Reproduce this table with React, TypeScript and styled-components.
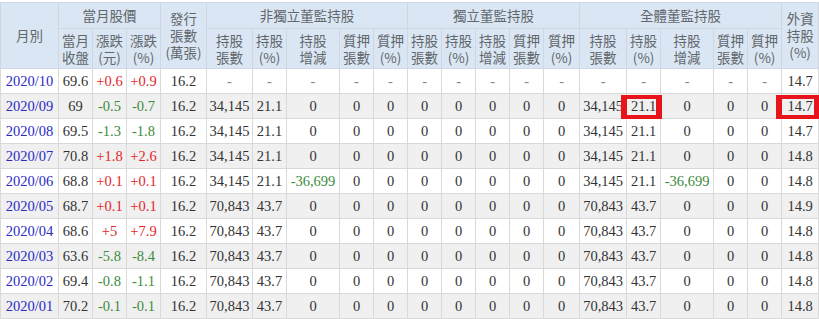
import styled, { createGlobalStyle } from "styled-components";

const GlobalStyle = createGlobalStyle`
	body {
		margin: 0;
		background: #ffffff;
	}
`;

const Page = styled.div`
	padding-top: 2px;
	width: 819px;
`;

const Table = styled.table`
	border-collapse: collapse;
	table-layout: fixed;
	width: 818px;
	font-family: "Liberation Serif", "Times New Roman", serif;
	font-size: 14.5px;
	color: #333333;
`;

const HeadCell = styled.th`
	background: #dae6f3;
	border: 1px solid #cfd8e2;
	color: #62676c;
	font-family: "Noto Sans CJK TC", "Noto Sans", sans-serif;
	font-size: 13.5px;
	font-weight: normal;
	line-height: 17px;
	padding: 0;
	text-align: center;
	vertical-align: middle;
	white-space: nowrap;
`;

const GroupRow = styled.tr`
	height: 26px;
`;

const SubRow = styled.tr`
	height: 40px;
`;

const BodyRow = styled.tr<{ $shaded: boolean }>`
	height: 25px;
	background: ${({ $shaded }) => ($shaded ? "#f0f0f0" : "#ffffff")};
`;

type Tone = "up" | "down" | "dash" | "plain";

const toneColor: Record<Tone, string> = {
	up: "#e3262b",
	down: "#3d8b3d",
	dash: "#888888",
	plain: "#333333",
};

const Cell = styled.td<{ $tone: Tone; $marked?: boolean }>`
	border: 1px solid #d9d9d9;
	color: ${({ $tone }) => toneColor[$tone]};
	padding: 0;
	position: relative;
	text-align: center;
	white-space: nowrap;

	${({ $marked }) =>
		$marked &&
		`
		&::after {
			content: "";
			position: absolute;
			left: -6px;
			right: -2px;
			top: 1px;
			bottom: -1px;
			border-style: solid;
			border-color: #e8141c;
			border-width: 4px 6px;
		}
	`}
`;

const DateCell = styled.td`
	border: 1px solid #d9d9d9;
	color: #2b2bc4;
	padding: 0;
	text-align: center;
	white-space: nowrap;
`;

const widths = [
	58, 34, 34, 34, 46, 46, 34, 53, 34, 34, 34, 34, 34, 34, 36, 47, 34, 53, 34,
	34, 37,
];

interface MonthRow {
	month: string;
	close: string;
	change: string;
	pct: string;
	issued: string;
	board: string[] | null;
	foreign: string;
}

const Z5 = ["0", "0", "0", "0", "0"];

function holdings(shares: string, pct: string, delta: string) {
	return [shares, pct, delta, "0", "0", ...Z5, shares, pct, delta, "0", "0"];
}

const rows: MonthRow[] = [
	{ month: "2020/10", close: "69.6", change: "+0.6", pct: "+0.9", issued: "16.2", board: null, foreign: "14.7" },
	{ month: "2020/09", close: "69", change: "-0.5", pct: "-0.7", issued: "16.2", board: holdings("34,145", "21.1", "0"), foreign: "14.7" },
	{ month: "2020/08", close: "69.5", change: "-1.3", pct: "-1.8", issued: "16.2", board: holdings("34,145", "21.1", "0"), foreign: "14.7" },
	{ month: "2020/07", close: "70.8", change: "+1.8", pct: "+2.6", issued: "16.2", board: holdings("34,145", "21.1", "0"), foreign: "14.8" },
	{ month: "2020/06", close: "68.8", change: "+0.1", pct: "+0.1", issued: "16.2", board: holdings("34,145", "21.1", "-36,699"), foreign: "14.8" },
	{ month: "2020/05", close: "68.7", change: "+0.1", pct: "+0.1", issued: "16.2", board: holdings("70,843", "43.7", "0"), foreign: "14.9" },
	{ month: "2020/04", close: "68.6", change: "+5", pct: "+7.9", issued: "16.2", board: holdings("70,843", "43.7", "0"), foreign: "14.8" },
	{ month: "2020/03", close: "63.6", change: "-5.8", pct: "-8.4", issued: "16.2", board: holdings("70,843", "43.7", "0"), foreign: "14.8" },
	{ month: "2020/02", close: "69.4", change: "-0.8", pct: "-1.1", issued: "16.2", board: holdings("70,843", "43.7", "0"), foreign: "14.8" },
	{ month: "2020/01", close: "70.2", change: "-0.1", pct: "-0.1", issued: "16.2", board: holdings("70,843", "43.7", "0"), foreign: "14.8" },
];

function toneOf(value: string): Tone {
	if (value === "-") return "dash";
	if (value.startsWith("+")) return "up";
	if (value.startsWith("-")) return "down";
	return "plain";
}

const subHeads = [
	["持股", "張數"],
	["持股", "(%)"],
	["持股", "增減"],
	["質押", "張數"],
	["質押", "(%)"],
];

function TwoLine({ lines }: { lines: string[] }) {
	return (
		<>
			{lines[0]}
			<br />
			{lines[1]}
		</>
	);
}

export default function App() {
	return (
		<Page>
			<GlobalStyle />
			<Table>
				<colgroup>
					{widths.map((w, i) => (
						<col key={i} style={{ width: w }} />
					))}
				</colgroup>
				<thead>
					<GroupRow>
						<HeadCell rowSpan={2}>月別</HeadCell>
						<HeadCell colSpan={3}>當月股價</HeadCell>
						<HeadCell rowSpan={2}>
							發行
							<br />
							張數
							<br />
							(萬張)
						</HeadCell>
						<HeadCell colSpan={5}>非獨立董監持股</HeadCell>
						<HeadCell colSpan={5}>獨立董監持股</HeadCell>
						<HeadCell colSpan={5}>全體董監持股</HeadCell>
						<HeadCell rowSpan={2}>
							外資
							<br />
							持股
							<br />
							(%)
						</HeadCell>
					</GroupRow>
					<SubRow>
						<HeadCell>
							<TwoLine lines={["當月", "收盤"]} />
						</HeadCell>
						<HeadCell>
							<TwoLine lines={["漲跌", "(元)"]} />
						</HeadCell>
						<HeadCell>
							<TwoLine lines={["漲跌", "(%)"]} />
						</HeadCell>
						{[0, 1, 2].flatMap((g) =>
							subHeads.map((h, i) => (
								<HeadCell key={`${g}-${i}`}>
									<TwoLine lines={h} />
								</HeadCell>
							)),
						)}
					</SubRow>
				</thead>
				<tbody>
					{rows.map((row, r) => {
						const board = row.board ?? Array(15).fill("-");
						return (
							<BodyRow key={row.month} $shaded={r % 2 === 1}>
								<DateCell>{row.month}</DateCell>
								<Cell $tone="plain">{row.close}</Cell>
								<Cell $tone={toneOf(row.change)}>{row.change}</Cell>
								<Cell $tone={toneOf(row.pct)}>{row.pct}</Cell>
								<Cell $tone="plain">{row.issued}</Cell>
								{board.map((v, i) => (
									<Cell
										key={i}
										$tone={toneOf(v)}
										$marked={r === 1 && i === 11}
									>
										{v}
									</Cell>
								))}
								<Cell $tone="plain" $marked={r === 1}>
									{row.foreign}
								</Cell>
							</BodyRow>
						);
					})}
				</tbody>
			</Table>
		</Page>
	);
}
